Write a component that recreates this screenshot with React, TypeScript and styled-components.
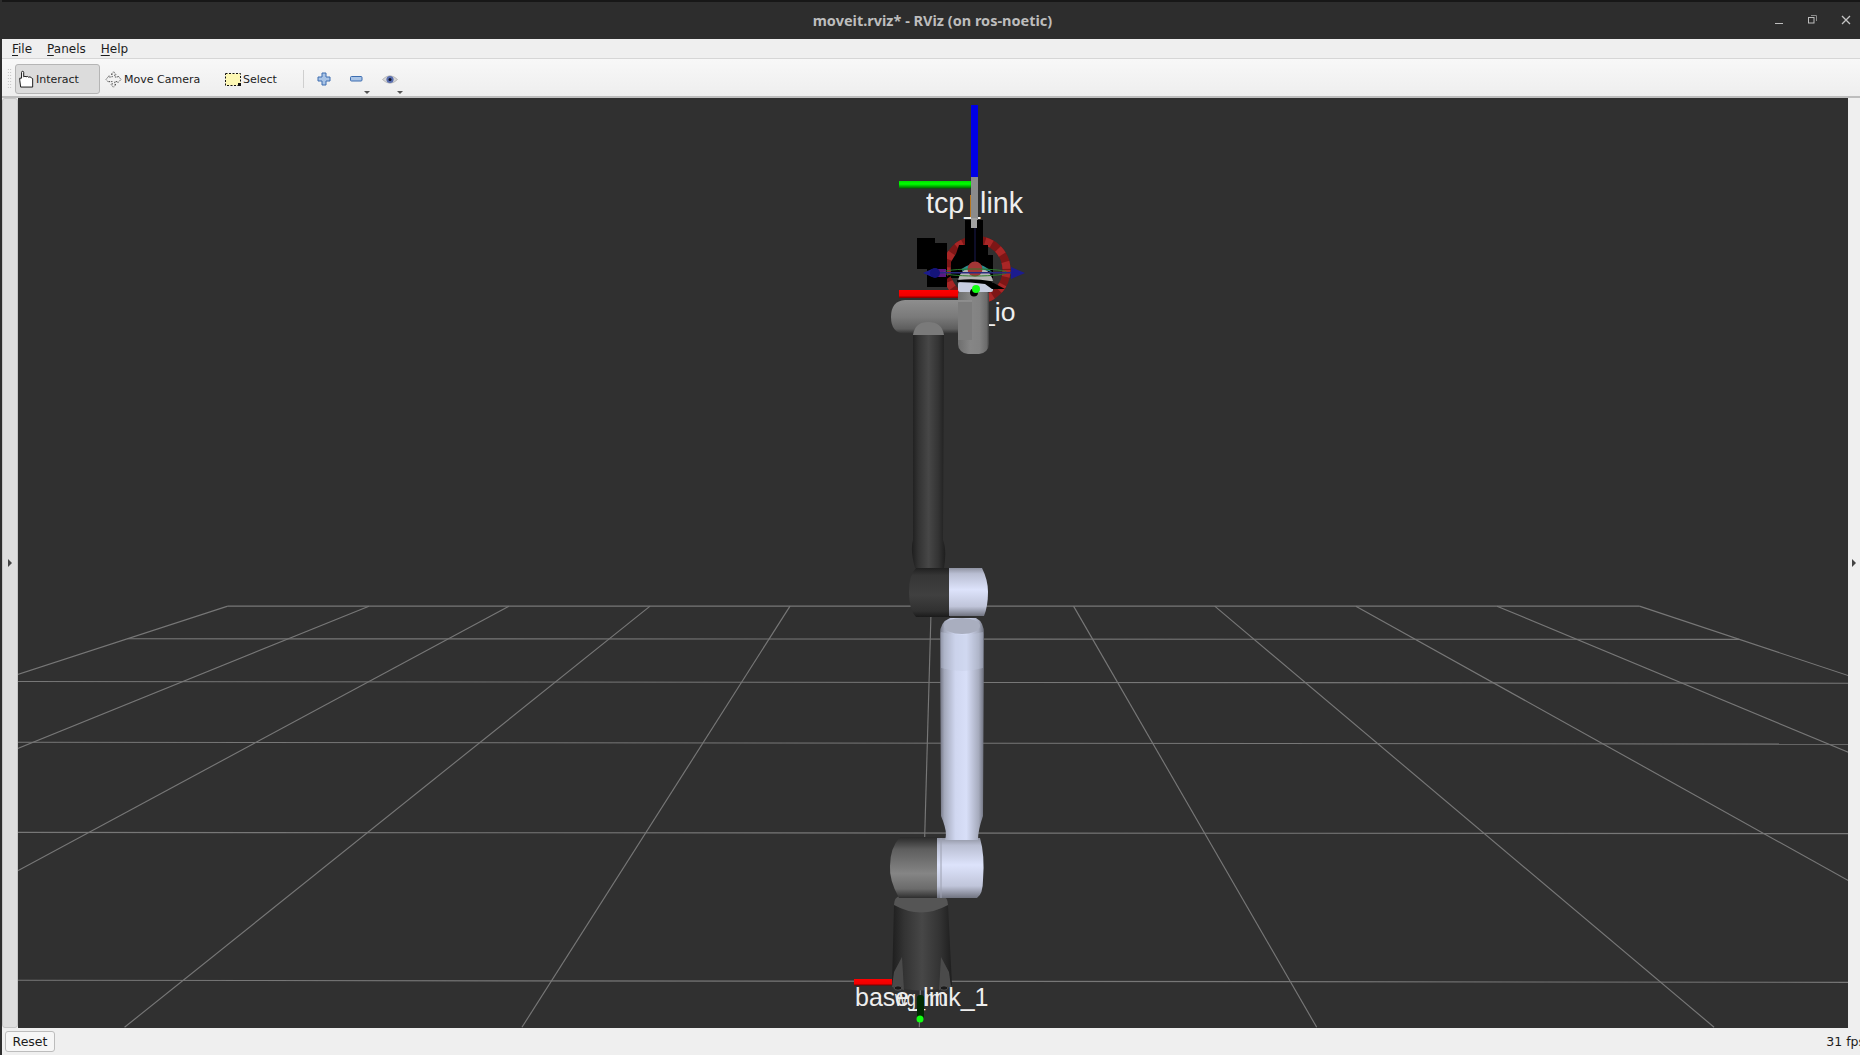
import React from "react";
import styled, { createGlobalStyle } from "styled-components";

const Global = createGlobalStyle`
  html, body { margin: 0; padding: 0; height: 100%; overflow: hidden; background: #efefef; }
  #root { height: 100%; }
`;

const Win = styled.div`
  height: 1055px; width: 1860px; display: flex; flex-direction: column;
  box-sizing: border-box; border-left: 2px solid #2d2d2d; overflow: hidden;
  font-family: "DejaVu Sans", sans-serif; color: #1c1c1c; background: #efefef;
`;
const TitleBar = styled.div`
  height: 39px; flex: none; box-sizing: border-box; background: #2d2d2d;
  border-top: 2px solid #171717; position: relative; display: flex; align-items: center; justify-content: center;
  padding-left: 3px;
`;
const Title = styled.div`
  font: 700 14.5px "Noto Sans", sans-serif; color: #bdbdbd; margin-top: -1px;
`;
const WinControls = styled.div`
  position: absolute; right: -3px; top: 0; display: flex; align-items: center; height: 37px;
`;
const WinBtn = styled.div`
  width: 33.5px; height: 37px; display: flex; align-items: center; justify-content: center; margin-top: -1px;
`;
const MenuBar = styled.div`
  height: 20px; flex: none; display: flex; align-items: center; padding-left: 10px; gap: 15px;
  background: #efefef; font-size: 12px; box-sizing: border-box; border-bottom: 1px solid #d6d6d6;
`;
const MenuItem = styled.span`
  u { text-decoration-thickness: 1px; text-underline-offset: 2px; }
`;
const ToolBar = styled.div`
  height: 39px; flex: none; box-sizing: border-box; display: flex; align-items: center;
  background: linear-gradient(#f8f8f8, #eeeeee); border-bottom: 2px solid #bdbdbd;
  padding: 3px 0 0 5px; font-size: 11px;
`;
const Grip = styled.div`
  width: 5px; height: 22px; margin-right: 3px;
  background-image: radial-gradient(#b9b9b9 0.7px, transparent 0.8px);
  background-size: 2.5px 3px;
`;
const ToolButton = styled.div<{ $active?: boolean; $w: number; $pad: number }>`
  width: ${(p) => p.$w}px; height: 30px; box-sizing: border-box; display: flex; align-items: center; gap: 2px;
  padding-left: ${(p) => p.$pad}px; border-radius: 3px;
  border: 1px solid ${(p) => (p.$active ? "#b5b5b5" : "transparent")};
  background: ${(p) => (p.$active ? "#dcdcdc" : "transparent")};
`;
const ToolSep = styled.div`
  width: 1px; height: 18px; background: #cfcfcf; margin: 0 3px 0 5px;
`;
const IconButton = styled.div`
  width: 33px; height: 30px; position: relative; display: flex; align-items: center; justify-content: center;
`;
const Drop = styled.span`
  position: absolute; right: 3px; bottom: 0; width: 0; height: 0;
  border-left: 3px solid transparent; border-right: 3px solid transparent; border-top: 3px solid #555;
`;
const Main = styled.div`
  flex: 1; min-height: 0; display: flex; align-items: stretch;
`;
const Splitter = styled.div<{ $left?: boolean }>`
  flex: none; width: ${(p) => (p.$left ? 16 : 12)}px; box-sizing: border-box; display: flex; align-items: center; justify-content: center;
  background: ${(p) => (p.$left ? "#dedede" : "#efefef")};
  ${(p) => p.$left && "border: 1px solid #c6c6c6; border-radius: 3px;"}
`;
const SplitArrow = styled.span`
  width: 0; height: 0; border-top: 4px solid transparent; border-bottom: 4px solid transparent; border-left: 4px solid #444;
`;
const Viewport = styled.div`
  flex: 1; min-width: 0; background: #303030; overflow: hidden;
  svg { display: block; width: 100%; height: 100%; }
  text { font-family: "Liberation Sans", sans-serif; fill: #eeeeee; }
`;
const StatusBar = styled.div`
  height: 27px; flex: none; box-sizing: border-box; display: flex; align-items: center; justify-content: space-between;
  padding: 0 0 0 3px; background: #efefef; font-size: 12.5px;
`;
const Reset = styled.button`
  width: 50px; height: 21px; padding: 0; font: inherit; color: #1c1c1c; background: #f6f6f6;
  border: 1px solid #bcbcbc; border-radius: 3px;
`;
const Fps = styled.span`
  margin-right: -5px; white-space: nowrap;
`;

const S = 1860 / 1568;
const topX = [192, 311, 429, 548, 666, 785, 905, 1024, 1143, 1262, 1382];
const rows: [number, number][] = [[511, 511], [538.5, 539], [574.5, 576], [625.5, 627.5], [701.5, 703], [825.5, 829]];
const botX = (i: number) => 775 + (i - 5) * 335;
const lineX = (i: number, y: number) => topX[i] + ((botX(i) - topX[i]) * (y - 511)) / 355;

function Grid() {
  return (
    <g stroke="#777777" strokeWidth="1.15" fill="none">
      {topX.map((x, i) => (
        <line key={i} x1={x * S} y1={511 * S} x2={botX(i) * S} y2={866 * S} />
      ))}
      {rows.map(([a, b], i) => {
        const l = lineX(0, a);
        const r = lineX(10, b);
        return <line key={i} x1={l * S} y1={a * S} x2={r * S} y2={b * S} />;
      })}
    </g>
  );
}

function Gradients() {
  const h = (id: string, stops: [number, string][]) => (
    <linearGradient id={id} x1="0" x2="1" y1="0" y2="0">
      {stops.map(([o, c]) => <stop key={o} offset={o} stopColor={c} />)}
    </linearGradient>
  );
  const v = (id: string, stops: [number, string][]) => (
    <linearGradient id={id} x1="0" x2="0" y1="0" y2="1">
      {stops.map(([o, c]) => <stop key={o} offset={o} stopColor={c} />)}
    </linearGradient>
  );
  return (
    <defs>
      {h("lightH", [[0, "#6f7280"], [0.1, "#a3a8ba"], [0.35, "#d0d7f0"], [0.6, "#d8dff8"], [0.88, "#a5aabc"], [1, "#6c6f7c"]])}
      {v("lightV", [[0, "#8f93a2"], [0.12, "#b9bed2"], [0.45, "#dde3fb"], [0.8, "#c0c5da"], [1, "#70737f"]])}
      {h("grayH", [[0, "#6e6e6e"], [0.4, "#868686"], [0.7, "#828282"], [0.93, "#6a6a6a"], [1, "#3e3e3e"]])}
      {v("grayV", [[0, "#8e8e8e"], [0.5, "#7a7a7a"], [0.85, "#5e5e5e"], [1, "#2c2c2c"]])}
      {v("grayJ", [[0, "#2a2a2a"], [0.2, "#5e5e5e"], [0.6, "#858585"], [0.85, "#6b6b6b"], [1, "#2e2e2e"]])}
      {h("darkH", [[0, "#1e1e1e"], [0.2, "#333"], [0.5, "#474747"], [0.8, "#333"], [1, "#1e1e1e"]])}
      {v("darkV", [[0, "#202020"], [0.15, "#363636"], [0.55, "#404040"], [0.88, "#303030"], [1, "#1a1a1a"]])}
      {v("redBar", [[0, "#ff0000"], [0.7, "#f00000"], [1, "#7a0000"]])}
      {v("greenBar", [[0, "#00e000"], [0.4, "#00ff00"], [1, "#006000"]])}
    </defs>
  );
}

function Robot() {
  return (
    <g>
      {/* base */}
      <path d="M894 905 L948 905 L952 985 Q922 996 892 985 Z" fill="url(#darkH)" />
      <path d="M894 905 Q894 897 900 896 L942 896 Q948 897 948 905 Q921 920 894 905 Z" fill="#555" />
      <path d="M892 987 L894 972 L902 957 L904 990 Z" fill="#4a4a4a" />
      <path d="M951 987 L949 972 L941 957 L939 990 Z" fill="#4a4a4a" />
      <ellipse cx="898" cy="988" rx="4" ry="2.2" fill="#1a1a1a" stroke="#555" />
      <ellipse cx="944" cy="988" rx="4" ry="2.2" fill="#1a1a1a" stroke="#555" />
      {/* lower elbow */}
      <path d="M900 837 L938 837 L938 898 L899 898 Q889 880 890 866 Q890 848 900 837 Z" fill="url(#grayJ)" />
      <path d="M937 838 L980 838 Q985 855 983 880 Q983 894 977 898 L937 898 Z" fill="url(#lightV)" />
      <line x1="941" y1="838" x2="941" y2="898" stroke="#9ca0b0" />
      {/* light forearm */}
      <path d="M945 840 Q948 832 941 816 L940 634 Q940 622 950 618 L976 618 Q984 622 984 634 L983 816 Q978 830 978 840 Z" fill="url(#lightH)" />
      <ellipse cx="962" cy="626" rx="18" ry="8" fill="#a9aebf" />
      <path d="M941 668 Q962 674 983 668 L983 632 Q962 638 941 632 Z" fill="#c4cae2" opacity="0.35" />
      {/* upper joint */}
      <path d="M916 568 L950 568 L950 617 L916 617 Q909 610 909 592 Q909 575 916 568 Z" fill="url(#darkV)" />
      <path d="M949 568 L982 568 Q988 580 988 592 Q988 606 984 616 L949 616 Z" fill="url(#lightV)" />
      {/* dark arm */}
      <path d="M913 335 L944 335 L943 540 Q947 550 944 568 L915 568 Q910 550 913 540 Z" fill="url(#darkH)" />
      {/* ring */}
      <circle cx="976.5" cy="270" r="30" fill="none" stroke="#7d1616" strokeWidth="8" />
      <circle cx="976.5" cy="270" r="30" fill="none" stroke="#a92626" strokeWidth="8" strokeDasharray="7 8" />
      {/* upper link */}
      <rect x="958" y="285" width="31" height="69" rx="10" fill="url(#grayH)" />
      <path d="M905 300 L972 300 L972 334 L905 334 Q891 333 891 317 Q891 301 905 300 Z" fill="url(#grayV)" />
      <path d="M958 302 L972 302 L972 340 L958 340 Z" fill="#7c7c7c" />
      <path d="M913 335 Q915 322 928 322 Q942 322 944 335 Z" fill="#7a7a7a" />
      {/* tool */}
      <rect x="970" y="195" width="2" height="22" fill="#b8761e" />
      <rect x="971" y="177" width="7" height="44" fill="#8b8b8b" />
      {/* gripper */}
      <path d="M965 220 L983 220 L983 245 L988 245 L988 255 L993 255 L993 278 L951 278 L951 262 L956 254 L959 245 L965 245 Z" fill="#000" />
      <path d="M917 238 L935 238 L935 243 L947 243 L947 287 L927 287 L927 269 L917 269 Z" fill="#000" />
      <rect x="971" y="218" width="6" height="10" fill="#a0a0a0" />
      <line x1="975" y1="228" x2="975" y2="268" stroke="#1a1a50" />
      {/* wrist */}
      <path d="M958 281 Q960 268 975 266 Q990 268 993 281 Z" fill="#b4b4b4" />
      <path d="M958 272 Q975 256 992 272 Q975 266 958 272 Z" fill="#2a8f8c" />
      <rect x="958" y="282" width="35" height="10" rx="2" fill="#c8cde0" />
      <circle cx="975" cy="269" r="7.5" fill="#a23636" />
      <path d="M943 281 Q955 270 962 271" fill="none" stroke="#000" strokeWidth="2" />
      <path d="M957 280 Q975 278 990 281 L1005 289 L992 289 L985 284 Q970 282 957 282 Z" fill="#000" />
      {/* tf arrows */}
      <ellipse cx="975" cy="272.5" rx="32" ry="3.5" fill="none" stroke="#2c7a2c" strokeWidth="1" />
      <rect x="935" y="269" width="11" height="8" fill="#6a1e9a" opacity="0.85" />
      <line x1="935" y1="272.7" x2="1012" y2="272.7" stroke="#2a2a80" strokeWidth="1.5" />
      <path d="M1011 267 L1025 273 L1011 279 Z" fill="#1c1c8e" />
      <path d="M932 269 L923 273 L932 277 Z" fill="#1c1c8e" />
      <circle cx="935" cy="273" r="5" fill="#14147a" />
      <circle cx="974" cy="292.5" r="4" fill="#000" />
      <circle cx="976" cy="289" r="4" fill="#12ff12" />
      {/* axes */}
      <rect x="971" y="105" width="7" height="72" fill="#0000e6" />
      <rect x="899" y="181" width="72" height="7.5" fill="url(#greenBar)" />
      <rect x="899" y="290" width="59" height="8" fill="url(#redBar)" />
      <rect x="854" y="979" width="38" height="6.5" fill="url(#redBar)" />
    </g>
  );
}

function Hand() {
  return (
    <svg width="16" height="19" viewBox="0 0 18 20" fill="#fff" stroke="#1a1a1a" strokeWidth="1.1">
      <path d="M3 18.5 L2 11 L2 8.5 L4 8.5 L4 2 Q4 .8 5.2 .8 Q6.4 .8 6.4 2 L6.4 7 Q8 5.6 9 7 Q10.6 5.8 11.8 7.4 Q13.6 6.4 15 8 L16.5 9 L16.5 18.5 Z" />
    </svg>
  );
}

function MoveIcon() {
  return (
    <svg width="17" height="17" viewBox="0 0 17 17" fill="#f2f2f2" stroke="#555" strokeWidth="1">
      <path d="M8.5 .8 L11 3.5 L9.8 3.5 L9.8 6 L13 6 L13 4.8 L16 8.5 L13 11.5 L13 10.6 L9.8 10.6 L9.8 13.5 L11 13.5 L8.5 16.2 L6 13.5 L7.2 13.5 L7.2 10.6 L4 10.6 L4 11.5 L1 8.5 L4 4.8 L4 6 L7.2 6 L7.2 3.5 L6 3.5 Z" strokeDasharray="1.5 1" />
    </svg>
  );
}

function SelectIcon() {
  return (
    <svg width="16" height="13" viewBox="0 0 16 13">
      <rect x=".5" y=".5" width="15" height="12" fill="#fdf8b4" stroke="#111" strokeDasharray="2 1.5" />
      <rect x="13" y="10" width="3" height="3" fill="#111" />
    </svg>
  );
}

function PlusIcon() {
  return (
    <svg width="14" height="14" viewBox="0 0 14 14">
      <path d="M5 1 L9 1 L9 5 L13 5 L13 9 L9 9 L9 13 L5 13 L5 9 L1 9 L1 5 L5 5 Z" fill="#a9c4e6" stroke="#3c6db0" />
    </svg>
  );
}

function MinusIcon() {
  return (
    <svg width="14" height="6" viewBox="0 0 14 6">
      <rect x=".5" y=".5" width="11.5" height="4.5" rx="1" fill="#a9c4e6" stroke="#3c6db0" />
    </svg>
  );
}

function EyeIcon() {
  return (
    <svg width="16" height="11" viewBox="0 0 16 11">
      <path d="M.5 5.5 Q8 -2 15.5 5.5 Q8 13 .5 5.5 Z" fill="#d8d8d8" stroke="#bbb" />
      <circle cx="8" cy="5.5" r="3.6" fill="#5a6fb0" />
      <circle cx="8" cy="5.5" r="1.5" fill="#10142a" />
    </svg>
  );
}

export default function App() {
  return (
    <Win>
      <Global />
      <TitleBar>
        <Title>moveit.rviz* - RViz (on ros-noetic)</Title>
        <WinControls>
          <WinBtn>
            <svg width="10" height="10" viewBox="0 0 10 10"><rect x="1" y="8" width="8" height="1" fill="#bdbdbd" /></svg>
          </WinBtn>
          <WinBtn>
            <svg width="10" height="10" viewBox="0 0 10 10" fill="none" stroke="#bdbdbd"><rect x=".5" y="2.5" width="5.5" height="5.5" /><path d="M3 .5 L8.5 .5 L8.5 6" stroke="#8a8a8a" /></svg>
          </WinBtn>
          <WinBtn>
            <svg width="10" height="10" viewBox="0 0 10 10" stroke="#c4c4c4" strokeWidth="1.3"><path d="M1 1 L9 9 M9 1 L1 9" /></svg>
          </WinBtn>
        </WinControls>
      </TitleBar>
      <MenuBar>
        <MenuItem><u>F</u>ile</MenuItem>
        <MenuItem><u>P</u>anels</MenuItem>
        <MenuItem><u>H</u>elp</MenuItem>
      </MenuBar>
      <ToolBar>
        <Grip />
        <ToolButton $active $w={85} $pad={2}><Hand />Interact</ToolButton>
        <ToolButton $w={120} $pad={4}><MoveIcon />Move Camera</ToolButton>
        <ToolButton $w={78} $pad={4}><SelectIcon />Select</ToolButton>
        <ToolSep />
        <IconButton><PlusIcon /></IconButton>
        <IconButton><MinusIcon /><Drop /></IconButton>
        <IconButton><EyeIcon /><Drop /></IconButton>
      </ToolBar>
      <Main>
        <Splitter $left><SplitArrow /></Splitter>
        <Viewport>
          <svg viewBox="18 98 1830 930">
            <Gradients />
            <Grid />
            <text x="926" y="213" fontSize="28.6">tcp_link</text>
            <text x="980" y="320.5" fontSize="26.5">_io</text>
            <Robot />
            <text x="855" y="1006" fontSize="25">base_link_1</text>
            <text x="895" y="1006" fontSize="22" textLength="53" lengthAdjust="spacingAndGlyphs">wg_mu</text>
            <rect x="917" y="995" width="7" height="24" rx="3" fill="#012a01" />
            <circle cx="920" cy="1019" r="3.5" fill="#12ff12" />
          </svg>
        </Viewport>
        <Splitter><SplitArrow /></Splitter>
      </Main>
      <StatusBar>
        <Reset>Reset</Reset>
        <Fps>31 fps</Fps>
      </StatusBar>
    </Win>
  );
}
